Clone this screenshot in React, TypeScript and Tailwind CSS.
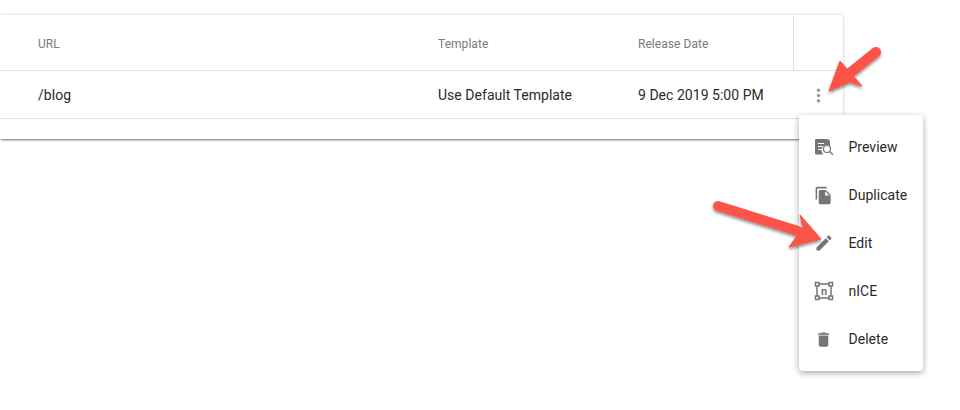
function Item({ label, children }: { label: string; children: React.ReactNode }) {
  return (
    <div className="flex items-center h-[48px]">
      <div className="w-[49.5px] flex items-center justify-center">{children}</div>
      <span className="pt-px">{label}</span>
    </div>
  );
}

export default function App() {
  return (
    <div className="relative w-[960px] h-[410px] overflow-hidden bg-white pt-[15px] font-['Roboto',sans-serif]">
      {/* Table card */}
      <div className="w-[843px] h-[124px] bg-white shadow-[0_2px_2px_-1px_rgba(0,0,0,0.5),0_0_2px_rgba(0,0,0,0.16),0_0_6px_rgba(0,0,0,0.05)]">
        <div className="flex h-[56px] border-b border-[#e0e0e0] text-[12px] text-[#7a7a7a] tracking-[0.05px]">
          <div className="w-[438px] pl-[38px] pt-[2px] flex items-center">URL</div>
          <div className="w-[200px] pt-[2px] flex items-center">Template</div>
          <div className="w-[155px] pt-[2px] flex items-center">Release Date</div>
          <div className="flex-1 border-l border-[#e0e0e0]" />
        </div>
        <div className="flex h-[48px] border-b border-[#e0e0e0] text-[14px] text-[#2b2b2b] tracking-[0.03px]">
          <div className="w-[438px] pl-[38px] pt-[2px] flex items-center">/blog</div>
          <div className="w-[200px] pt-[2px] flex items-center">Use Default Template</div>
          <div className="w-[155px] pt-[2px] flex items-center">9 Dec 2019 5:00 PM</div>
          <div className="flex-1 flex items-center pl-[15px] pt-px">
            <svg width="21" height="21" viewBox="0 0 24 24" fill="#9a9a9a">
              <path d="M12 8c1.1 0 2-.9 2-2s-.9-2-2-2-2 .9-2 2 .9 2 2 2zm0 2c-1.1 0-2 .9-2 2s.9 2 2 2 2-.9 2-2-.9-2-2-2zm0 6c-1.1 0-2 .9-2 2s.9 2 2 2 2-.9 2-2-.9-2-2-2z" />
            </svg>
          </div>
        </div>
      </div>

      {/* Menu */}
      <div className="absolute left-[799px] top-[115px] w-[124px] h-[256px] py-2 bg-white rounded-[4px] shadow-[0_2px_6px_rgba(0,0,0,0.35)] text-[14px] text-[#2b2b2b] tracking-[0.03px]">
        <Item label="Preview">
          <svg width="20" height="20" viewBox="0 0 20 20">
            <path d="M2 2h12l2 2v5a5 5 0 0 0-6.5 8.500H2a1 1 0 0 1-1-1V3a1 1 0 0 1 1-1z" fill="#757575" />
            <path d="M4 6.500h6M4 9.500h4.500M4 12.500h3.500" stroke="#fff" strokeWidth="1.200" />
            <circle cx="13" cy="12" r="3.500" fill="none" stroke="#757575" strokeWidth="1.200" />
            <path d="M15.500 14.500l3.500 3.200" stroke="#757575" strokeWidth="1.400" />
          </svg>
        </Item>
        <Item label="Duplicate">
          <svg width="19" height="19" viewBox="0 0 24 24" fill="#757575">
            <path d="M16 1H4c-1.100 0-2 .9-2 2v14h2V3h12V1zm-1 4l6 6v10c0 1.100-.9 2-2 2H7.990C6.890 23 6 22.100 6 21l.01-14c0-1.100.89-2 1.990-2h7zm-1 7h5.500L14 6.500V12z" />
          </svg>
        </Item>
        <Item label="Edit">
          <svg width="20" height="20" viewBox="0 0 24 24" fill="#757575">
            <path d="M3 17.250V21h3.750L17.810 9.940l-3.750-3.750L3 17.250zM20.710 7.040c.39-.39.39-1.020 0-1.410l-2.340-2.340c-.39-.39-1.020-.39-1.410 0l-1.830 1.830 3.750 3.750 1.830-1.830z" />
          </svg>
        </Item>
        <Item label="nICE">
          <svg width="20" height="20" viewBox="0 0 20 20">
            <rect x="3" y="3" width="14" height="14" fill="none" stroke="#757575" strokeWidth="1.500" />
            <g fill="#fff" stroke="#757575" strokeWidth="1.500">
              <rect x="1.500" y="1.500" width="3.500" height="3.500" />
              <rect x="15" y="1.500" width="3.500" height="3.500" />
              <rect x="1.500" y="15" width="3.500" height="3.500" />
              <rect x="15" y="15" width="3.500" height="3.500" />
            </g>
            <text x="10" y="14" textAnchor="middle" fontSize="11" fontWeight="700" fill="#757575" fontFamily="Roboto, sans-serif">n</text>
          </svg>
        </Item>
        <Item label="Delete">
          <svg width="19" height="19" viewBox="0 0 24 24" fill="#757575">
            <path d="M6 19c0 1.100.9 2 2 2h8c1.100 0 2-.9 2-2V7H6v12zM19 4h-3.500l-1-1h-5l-1 1H5v2h14V4z" />
          </svg>
        </Item>
      </div>

      {/* Annotation arrows */}
      <svg className="absolute left-0 top-0 pointer-events-none" width="960" height="410" viewBox="0 0 960 410">
        <defs>
          <filter id="s" x="-30%" y="-30%" width="160%" height="160%">
            <feDropShadow dx="0" dy="2" stdDeviation="1.500" floodColor="#000" floodOpacity="0.45" />
          </filter>
        </defs>
        <g filter="url(#s)">
          <path d="M876 52L845 77" stroke="#fb5347" strokeWidth="10" strokeLinecap="round" />
          <path d="M829 91L840 61L862 86L850 82Z" fill="#fb5347" stroke="#fb5347" strokeWidth="1" strokeLinejoin="round" />
          <path d="M718 206L798 231" stroke="#fb5347" strokeWidth="10" strokeLinecap="round" />
          <path d="M821 239L800 215L803 228L789 247Z" fill="#fb5347" stroke="#fb5347" strokeWidth="1" strokeLinejoin="round" />
        </g>
      </svg>
    </div>
  );
}
